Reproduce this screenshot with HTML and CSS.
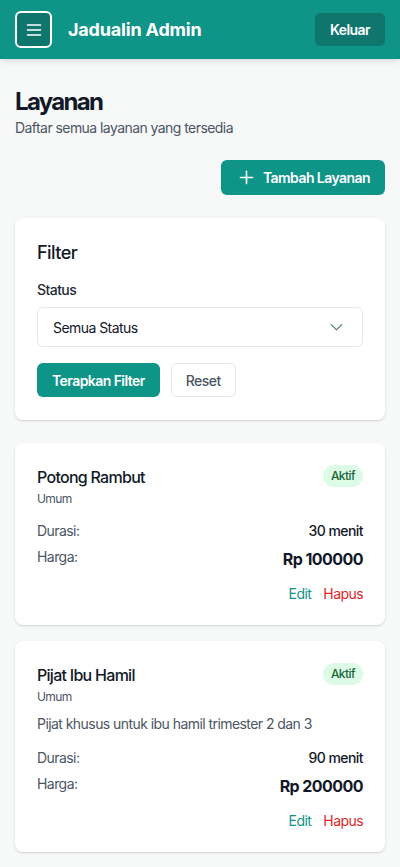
FILE: index.html
```html
<!DOCTYPE html>
<html lang="id">
<head>
  <meta charset="UTF-8" />
  <meta name="viewport" content="width=device-width, initial-scale=1.0"/>
  <title>Layanan - Jadualin Admin</title>
  <link rel="stylesheet" href="styles.css">
</head>
<body>
  <header class="topbar">
    <div class="topbar-left">
      <button class="menu-btn" aria-label="Menu">
        <svg width="16" height="14" viewBox="0 0 16 14" fill="none" stroke="white" stroke-width="1.6" stroke-linecap="round">
          <line x1="1.5" y1="2" x2="14.5" y2="2"/>
          <line x1="1.5" y1="7" x2="14.5" y2="7"/>
          <line x1="1.5" y1="12" x2="14.5" y2="12"/>
        </svg>
      </button>
      <span class="brand">Jadualin Admin</span>
    </div>
    <button class="logout-btn">Keluar</button>
  </header>

  <main class="page">
    <div class="page-head">
      <h1>Layanan</h1>
      <p>Daftar semua layanan yang tersedia</p>
    </div>

    <div class="actions">
      <button class="btn primary add-btn">
        <svg width="15" height="15" viewBox="0 0 16 16" fill="none" stroke="white" stroke-width="1.7" stroke-linecap="round">
          <line x1="8" y1="1.5" x2="8" y2="14.5"/>
          <line x1="1.5" y1="8" x2="14.5" y2="8"/>
        </svg>
        Tambah Layanan
      </button>
    </div>

    <section class="card filter-card">
      <h2>Filter</h2>
      <label class="field-label" for="status">Status</label>
      <div class="select">
        <span>Semua Status</span>
        <svg width="13" height="8" viewBox="0 0 14 8" fill="none" stroke="#6b8a8a" stroke-width="1.3">
          <polyline points="1,1 7,7 13,1"/>
        </svg>
      </div>
      <div class="filter-actions">
        <button class="btn primary">Terapkan Filter</button>
        <button class="btn outline">Reset</button>
      </div>
    </section>

    <div class="service-list">
      <article class="card service">
        <div class="service-top">
          <div>
            <h3>Potong Rambut</h3>
            <div class="category">Umum</div>
          </div>
          <span class="badge">Aktif</span>
        </div>
        <div class="rows">
          <div class="row"><span class="label">Durasi:</span><span class="value">30 menit</span></div>
          <div class="row"><span class="label">Harga:</span><span class="price">Rp 100000</span></div>
        </div>
        <div class="links">
          <a class="edit">Edit</a>
          <a class="delete">Hapus</a>
        </div>
      </article>

      <article class="card service">
        <div class="service-top">
          <div>
            <h3>Pijat Ibu Hamil</h3>
            <div class="category">Umum</div>
          </div>
          <span class="badge">Aktif</span>
        </div>
        <p class="desc">Pijat khusus untuk ibu hamil trimester 2 dan 3</p>
        <div class="rows">
          <div class="row"><span class="label">Durasi:</span><span class="value">90 menit</span></div>
          <div class="row"><span class="label">Harga:</span><span class="price">Rp 200000</span></div>
        </div>
        <div class="links">
          <a class="edit">Edit</a>
          <a class="delete">Hapus</a>
        </div>
      </article>
    </div>
  </main>
</body>
</html>
```

FILE: styles.css
```css
* {
  margin: 0;
  padding: 0;
  box-sizing: border-box;
}

body {
  background-color: #f7f8f8;
  font-family: Inter, 'Noto Sans', sans-serif;
  color: #111827;
  letter-spacing: -0.035em;
}

button {
  font-family: inherit;
  letter-spacing: inherit;
  border: none;
  cursor: pointer;
}

.topbar {
  height: 59px;
  background-color: #0f9488;
  padding: 0 15px;
  display: flex;
  align-items: center;
  justify-content: space-between;
  box-shadow: 0 2px 6px rgba(0, 0, 0, 0.12);
}

.topbar-left {
  display: flex;
  align-items: center;
  gap: 16px;
}

.menu-btn {
  width: 37px;
  height: 37px;
  border: 2px solid #fff;
  border-radius: 6px;
  background-color: #0f766e;
  display: flex;
  align-items: center;
  justify-content: center;
}

.brand {
  color: #fff;
  font-size: 18px;
  font-weight: 700;
  letter-spacing: -0.01em;
}

.logout-btn {
  background-color: #0f766e;
  color: #fff;
  font-size: 14px;
  font-weight: 600;
  height: 33px;
  padding: 0 15px;
  border-radius: 5px;
}

.page {
  padding: 27px 15px 20px;
}

.page-head h1 {
  font-size: 24px;
  line-height: 32px;
  font-weight: 700;
  letter-spacing: -0.07em;
}

.page-head p {
  font-size: 14px;
  line-height: 20px;
  color: #4b5563;
}

.actions {
  display: flex;
  justify-content: flex-end;
  margin-top: 22px;
}

.btn {
  border-radius: 6px;
  font-size: 14px;
  font-weight: 600;
  height: 34px;
  padding: 0 15px;
}

.btn.primary {
  background-color: #0f9488;
  color: #fff;
}

.btn.outline {
  background-color: #fff;
  color: #4b5563;
  border: 1px solid #e5e7eb;
  font-weight: 500;
  padding: 0 14px;
}

.add-btn {
  height: 35px;
  display: flex;
  align-items: center;
  gap: 9px;
  padding: 0 15px 0 18px;
}

.card {
  background-color: #fff;
  border-radius: 8px;
  box-shadow: 0 1px 3px rgba(0, 0, 0, 0.1), 0 1px 2px rgba(0, 0, 0, 0.06);
}

.filter-card {
  margin-top: 23px;
  padding: 21px 22px 23px;
}

.filter-card h2 {
  font-size: 18px;
  line-height: 28px;
  font-weight: 500;
}

.field-label {
  display: block;
  margin-top: 13px;
  font-size: 14px;
  line-height: 20px;
  font-weight: 500;
  color: #1f2937;
}

.select {
  margin-top: 7px;
  height: 40px;
  border: 1px solid #e5e7eb;
  border-radius: 6px;
  display: flex;
  align-items: center;
  justify-content: space-between;
  padding: 0 19px 0 15px;
  font-size: 14px;
}

.filter-actions {
  display: flex;
  gap: 11px;
  margin-top: 16px;
}

.service-list {
  margin-top: 23px;
  display: flex;
  flex-direction: column;
  gap: 16px;
}

.service {
  padding: 22px 22px 21px;
}

.service-top {
  display: flex;
  justify-content: space-between;
  align-items: flex-start;
}

.service h3 {
  font-size: 16px;
  line-height: 24px;
  font-weight: 500;
  letter-spacing: -0.045em;
}

.category {
  margin-top: 2px;
  font-size: 12px;
  line-height: 16px;
  color: #4b5563;
}

.badge {
  background-color: #dcfce7;
  color: #166534;
  font-size: 12px;
  font-weight: 500;
  line-height: 22px;
  padding: 0 8px;
  border-radius: 999px;
}

.desc {
  margin-top: 9px;
  font-size: 14px;
  line-height: 20px;
  color: #4b5563;
}

.rows {
  margin-top: 14px;
  display: flex;
  flex-direction: column;
  gap: 6px;
}

.row {
  display: flex;
  justify-content: space-between;
  align-items: flex-start;
  font-size: 14px;
  line-height: 20px;
}

.label {
  color: #4b5563;
}

.value {
  font-weight: 500;
}

.price {
  font-size: 16px;
  line-height: 24px;
  font-weight: 700;
}

.links {
  margin-top: 13px;
  display: flex;
  justify-content: flex-end;
  gap: 12px;
  font-size: 14px;
  line-height: 20px;
}

.edit {
  color: #0f9488;
}

.delete {
  color: #dc2626;
}
```
